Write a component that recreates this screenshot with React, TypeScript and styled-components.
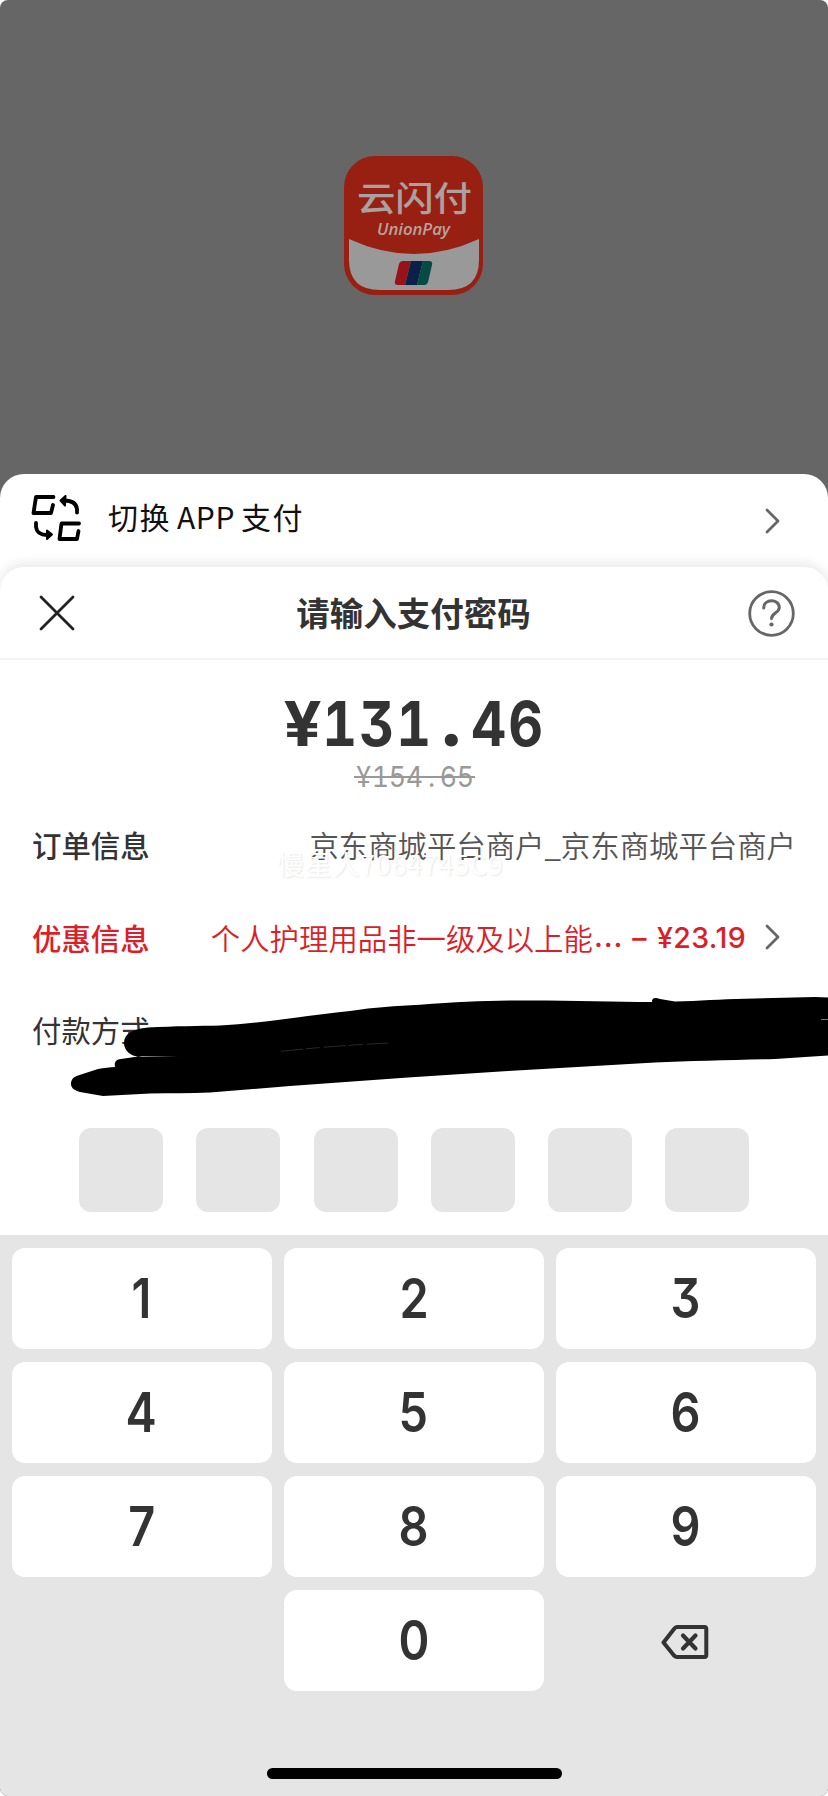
import React from "react";
import styled, { createGlobalStyle } from "styled-components";

const GlobalStyle = createGlobalStyle`
  *, *::before, *::after { box-sizing: border-box; }
  body { margin: 0; background: #fff; font-family: "Noto Sans CJK SC", sans-serif; }
  button { border: 0; padding: 0; background: none; font: inherit; color: inherit; display: block; }
  svg { display: block; flex: none; }
`;

const Screen = styled.main`
  position: relative;
  width: 828px;
  height: 1796px;
  overflow: hidden;
  border-radius: 8px;
  background: #666;
  display: flex;
  flex-direction: column;
`;

const Backdrop = styled.div`
  height: 474px;
  flex: none;
  padding-top: 156px;
  display: flex;
  justify-content: center;
  align-items: flex-start;
`;

const SwitchSheet = styled.section`
  flex: none;
  height: 123px;
  margin-bottom: -30px;
  border-radius: 24px 24px 0 0;
  background: #fff;
  padding: 0 47px 30px 31px;
  display: flex;
  align-items: center;
  > svg:first-child { margin-bottom: 5px; }
`;

const SwitchLabel = styled.span`
  flex: 1;
  margin: 0 0 9px 26px;
  font-size: 30px;
  letter-spacing: 1.5px;
  line-height: 44px;
  color: #111;
  span { margin: 0 6px 0 6px; letter-spacing: 0.6px; }
`;

const PaySheet = styled.section`
  flex: none;
  height: 668px;
  border-radius: 24px 24px 0 0;
  background: #fff;
  box-shadow: 0 -4px 12px rgba(0, 0, 0, 0.09);
  display: flex;
  flex-direction: column;
`;

const Header = styled.header`
  flex: none;
  height: 93px;
  border-bottom: 2px solid #f3f3f3;
  padding: 1px 33px 0 39px;
  display: flex;
  align-items: center;
  justify-content: space-between;
`;

const Title = styled.h1`
  margin: 0 0 2px 4px;
  font-size: 33.5px;
  line-height: 46px;
  font-weight: 700;
  color: #333;
`;

const Amounts = styled.div`
  height: 140px;
  flex: none;
  display: flex;
  flex-direction: column;
  align-items: center;
  font-family: Inter, sans-serif;
  font-feature-settings: "tnum", "cv09";
`;

const Price = styled.div`
  display: flex;
  align-items: baseline;
  margin-top: 19px;
  height: 72px;
  font-size: 62px;
  line-height: 72px;
  font-weight: 700;
  color: #333;
`;

const OldPrice = styled.div`
  position: relative;
  display: flex;
  height: 34px;
  margin-top: 9px;
  padding: 0 1px;
  font-size: 29px;
  line-height: 34px;
  font-weight: 400;
  color: #999;
  &::after {
    content: "";
    position: absolute;
    left: 0;
    right: 0;
    top: 16px;
    height: 2px;
    background: #999;
  }
`;

const Cell = styled.span<{ $w: number; $stretch?: number }>`
  width: ${(p) => p.$w}px;
  display: flex;
  justify-content: center;
  transform: scaleX(${(p) => p.$stretch || 0.92});
`;

const RoundDot = styled.span`
  width: 37.2px;
  text-align: center;
  font-family: Lato, sans-serif;
  font-size: 80px;
  line-height: 72px;
  font-weight: 900;
`;

const Row = styled.div<{ $color?: string; $end?: number }>`
  height: 92.5px;
  flex: none;
  padding: 0 ${(p) => p.$end || 32}px 4px 32px;
  display: flex;
  align-items: center;
  font-size: 29.4px;
  line-height: 44px;
  color: ${(p) => p.$color || "#333"};
  white-space: nowrap;
`;

const RowLabel = styled.span<{ $weight?: number }>`
  font-weight: ${(p) => p.$weight || 500};
`;

const RowValue = styled.span<{ $color?: string }>`
  display: flex;
  margin-left: auto;
  font-weight: 350;
  color: ${(p) => p.$color || "#555"};
`;

const Ellipsis = styled.span`
  font-family: Inter, sans-serif;
  font-weight: 450;
  letter-spacing: 0.9px;
  margin-left: 1px;
`;

const Discount = styled.span`
  display: flex;
  gap: 10px;
  margin: 3px 19px 0 9px;
  font-family: Inter, sans-serif;
  font-size: 28.5px;
  font-weight: 550;
  letter-spacing: 0.4px;
`;

const PinRow = styled.div`
  display: flex;
  gap: 33.1px;
  padding: 50px 0 0 79.4px;
`;

const PinBox = styled.div`
  width: 84px;
  height: 84px;
  border-radius: 12px;
  background: #e5e5e5;
`;

const Keypad = styled.section`
  flex: 1;
  background: #e5e5e5;
  padding: 13px 12.4px 0 12.4px;
  display: flex;
  flex-direction: column;
`;

const Keys = styled.div`
  display: grid;
  grid-template-columns: repeat(3, 1fr);
  grid-auto-rows: 101px;
  gap: 12.9px 12.5px;
`;

const Key = styled.button<{ $plain?: boolean }>`
  display: flex;
  align-items: center;
  justify-content: center;
  border-radius: 13px;
  background: ${(p) => (p.$plain ? "transparent" : "#fff")};
  font-family: Inter, sans-serif;
  font-feature-settings: "cv09";
  font-size: 54.5px;
  line-height: 60px;
  font-weight: 630;
  color: #333;
  padding: ${(p) => (p.$plain ? "4px 1px 0 0" : "0 1px 1px 0")};
  span { transform: scaleX(0.86); }
`;

const HomeBar = styled.div`
  width: 295px;
  height: 11px;
  border-radius: 6px;
  background: #000;
  margin: 77.5px auto 0;
`;

const Watermark = styled.div`
  position: absolute;
  left: 277px;
  top: 845px;
  font-size: 27px;
  line-height: 38px;
  white-space: nowrap;
  letter-spacing: 0.7px;
  color: #fff;
  text-shadow: 1px 1px 2px rgba(0, 0, 0, 0.1);
`;

const Scribble = styled.svg`
  position: absolute;
  left: 0;
  top: 990px;
`;

const Chevron = () => (
  <svg width="16" height="28" viewBox="0 0 16 28" fill="none" stroke="#666" strokeWidth="2.8" strokeLinecap="round" strokeLinejoin="round">
    <path d="M2 3 13 14 2 25" />
  </svg>
);

const AppLogo = () => (
  <svg width="140" height="140" viewBox="0 0 140 140">
    <rect width="139" height="139" rx="31" fill="#982012" />
    <path d="M5 83Q70 113 135 83V104Q135 134 104 134H36Q5 134 5 104Z" fill="#999" />
    <text transform="translate(13 54.500) scale(1 .88)" fontSize="38.500" fontWeight="500" textLength="115" fill="#aaa1a0">云闪付</text>
    <text x="33" y="79" fontFamily="Open Sans, sans-serif" fontSize="16" fontStyle="italic" fontWeight="600" textLength="73" lengthAdjust="spacingAndGlyphs" fill="#b8a29e">UnionPay</text>
    <path d="M59 105H67L61 129H54Q50 129 51 125L55 108Q56 105 59 105Z" fill="#981217" />
    <path d="M67 105H79L73 129H61Z" fill="#0b2048" />
    <path d="M79 105H85Q89 105 88 109L84 126Q83 129 80 129H73Z" fill="#034b43" />
  </svg>
);

const SwapIcon = () => (
  <svg width="51" height="48" viewBox="0 0 51 48" fill="none" stroke="#000" strokeWidth="3.8" strokeLinecap="round" strokeLinejoin="round">
    <path d="M22.500 3H5L2.500 19H20L22 11" />
    <path d="M48 29.500H30.500L28.500 45H46L47.500 37" />
    <path d="M46 18.500V15Q45 6.500 33 6.500" />
    <path d="M34.500 2 29.500 6.500 34 11.500Z" fill="#000" strokeWidth="2" />
    <path d="M5 29V33Q6 41 16 41" />
    <path d="M16 36.500 21 40.500 16 45Z" fill="#000" strokeWidth="2" />
  </svg>
);

const CloseIcon = () => (
  <svg width="36" height="36" viewBox="0 0 36 36" fill="none" stroke="#222" strokeWidth="2.8" strokeLinecap="round">
    <path d="M2 2 34 34M34 2 2 34" />
  </svg>
);

const HelpIcon = () => (
  <svg width="47" height="47" viewBox="0 0 47 47" fill="none" stroke="#666" strokeWidth="2.800" strokeLinecap="round">
    <circle cx="23.500" cy="23.500" r="21.800" />
    <path d="M15.700 18C15.700 8.500 31.300 8.500 31.300 17.500C31.300 23 23.500 23 23.500 28.500" strokeWidth="3" />
    <circle cx="23.500" cy="34.500" r="2.100" fill="#666" stroke="none" />
  </svg>
);

const DeleteIcon = () => (
  <svg width="48" height="36" viewBox="0 0 48 36" fill="none" stroke="#333" strokeWidth="4" strokeLinecap="round" strokeLinejoin="round">
    <path d="M16 3.100H43.500Q45.300 3.100 45.300 5V31Q45.300 33 43.500 33H16Q14.500 33 13 31.500L2.500 18.500 13 5Q14.500 3.100 16 3.100Z" />
    <path d="M22 11.500 34.500 24.500M34.500 11.500 22 24.500" strokeWidth="4.200" />
  </svg>
);

const digits = ["1", "2", "3", "4", "5", "6", "7", "8", "9"];

export default function App() {
  return (
    <>
      <GlobalStyle />
      <Screen>
        <Backdrop>
          <AppLogo />
        </Backdrop>
        <SwitchSheet>
          <SwapIcon />
          <SwitchLabel>切换<span>APP</span>支付</SwitchLabel>
          <Chevron />
        </SwitchSheet>
        <PaySheet>
          <Header>
            <CloseIcon />
            <Title>请输入支付密码</Title>
            <HelpIcon />
          </Header>
          <Amounts>
            <Price>
              {"¥131.46".split("").map((c, i) =>
                c === "." ? (
                  <RoundDot key={i}>{c}</RoundDot>
                ) : (
                  <Cell key={i} $w={37.2} $stretch={c === "¥" ? 1.08 : 0.87}>{c}</Cell>
                )
              )}
            </Price>
            <OldPrice>
              {"¥154.65".split("").map((c, i) => <Cell key={i} $w={17}>{c}</Cell>)}
            </OldPrice>
          </Amounts>
          <Row>
            <RowLabel>订单信息</RowLabel>
            <RowValue>京东商城平台商户_京东商城平台商户</RowValue>
          </Row>
          <Row $color="#dc1e28" $end={47}>
            <RowLabel>优惠信息</RowLabel>
            <RowValue $color="#dc1e28">个人护理用品非一级及以上能<Ellipsis>...</Ellipsis></RowValue>
            <Discount><span>–</span><span>¥23.19</span></Discount>
            <Chevron />
          </Row>
          <Row>
            <RowLabel $weight={400}>付款方式</RowLabel>
          </Row>
          <PinRow>
            {digits.slice(0, 6).map((d) => <PinBox key={d} />)}
          </PinRow>
        </PaySheet>
        <Keypad>
          <Keys>
            {digits.map((d) => <Key key={d}><span>{d}</span></Key>)}
            <Key $plain />
            <Key><span>0</span></Key>
            <Key $plain aria-label="delete"><DeleteIcon /></Key>
          </Keys>
          <HomeBar />
        </Keypad>
        <Watermark>慢星人7064745C9</Watermark>
        <Scribble width="828" height="112" viewBox="0 990 828 112">
          <path d="M148 1027.500C175 1026 200 1026 220 1025.500C265 1023 310 1015 350 1011C375 1007 395 1006 420 1004.700C455 1002 480 1001 510 1000.500C560 1000 610 1001.500 652 1002C652 998 654 997 660 999L675 1001.500C700 1001 720 999 745 998.700L815 997L828 997.500V1055.500L775 1059C735 1060 690 1061 655 1062.500L508 1071L408 1077.500L290 1086L210 1092.500C190 1093.500 170 1093 150 1093.500L103 1096L80 1092C73 1090 71 1087 71 1084C71 1080 73 1077 78 1075.500L98 1069C104 1067.500 110 1067.500 115 1067C114 1062 116 1059.500 121 1059L138 1056.500C130 1056 124 1050 124 1043C124 1034 132 1029 148 1027.500Z" />
          <path d="M138 1056.300L178 1056.500 142 1057Z" fill="#ccc" />
          <path d="M281 1051.300Q330 1046 388 1043" fill="none" stroke="#444" strokeWidth="0.600" strokeDasharray="22 3 14 4" />
          <path d="M821 1019.500H828" stroke="#777" strokeWidth="1" />
        </Scribble>
      </Screen>
    </>
  );
}
